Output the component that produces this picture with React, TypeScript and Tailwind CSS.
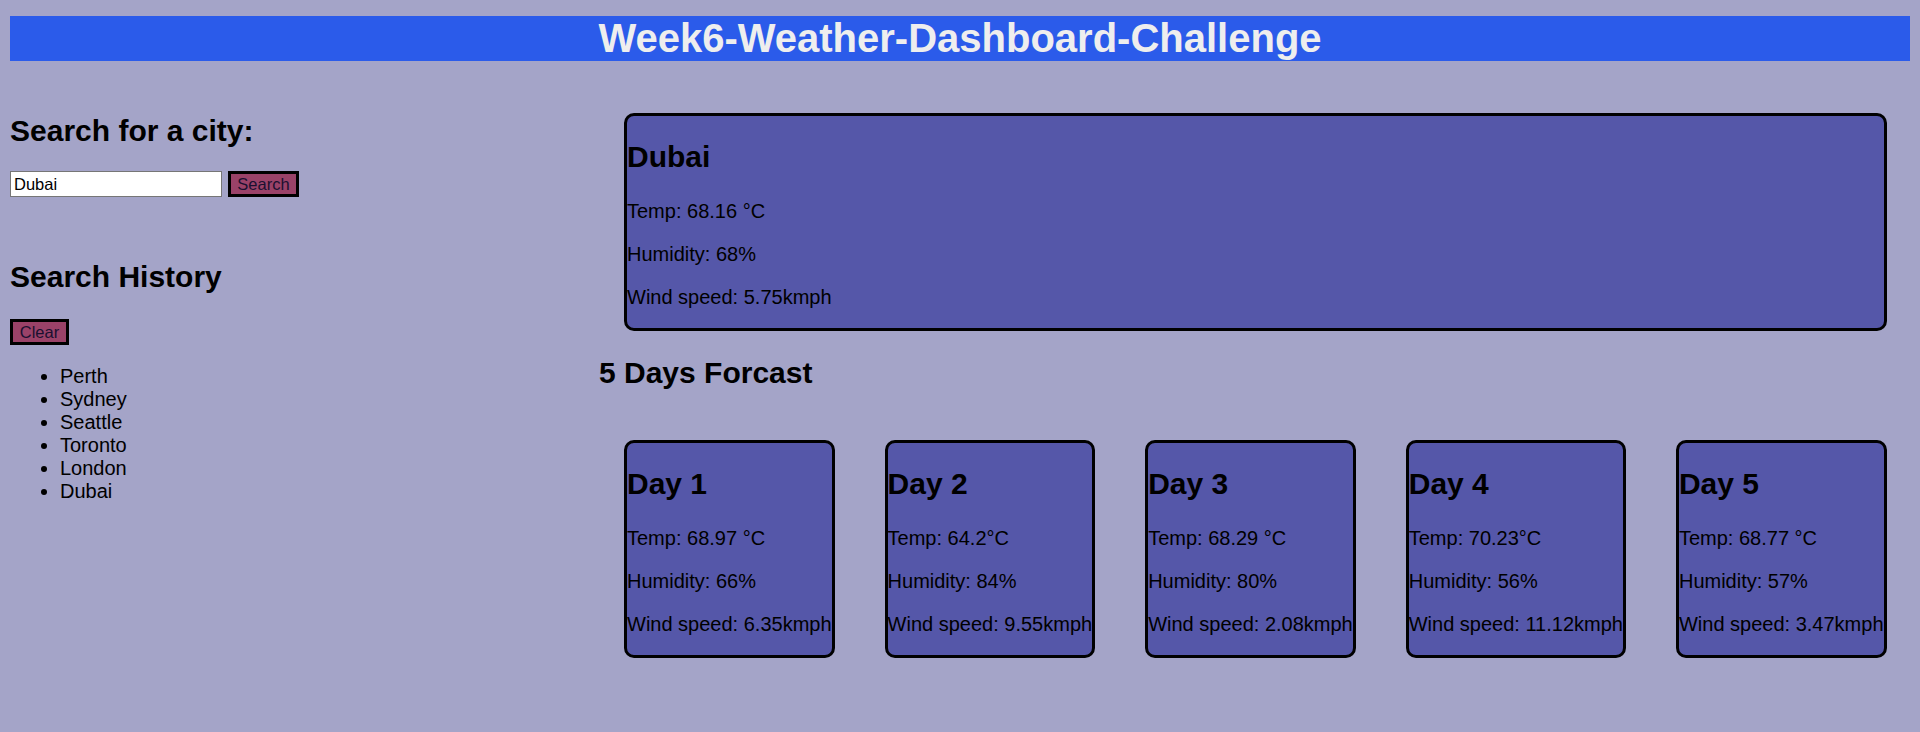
// Week6 weather dashboard: search panel on the left, current + 5 day forecast on the right

type Forecast = {
  label: string;
  temp: string;
  humidity: string;
  wind: string;
};

const HISTORY = ["Perth", "Sydney", "Seattle", "Toronto", "London", "Dubai"];

const FORECAST: Forecast[] = [
  { label: "Day 1", temp: "68.97 °C", humidity: "66%", wind: "6.35kmph" },
  { label: "Day 2", temp: "64.2°C", humidity: "84%", wind: "9.55kmph" },
  { label: "Day 3", temp: "68.29 °C", humidity: "80%", wind: "2.08kmph" },
  { label: "Day 4", temp: "70.23°C", humidity: "56%", wind: "11.12kmph" },
  { label: "Day 5", temp: "68.77 °C", humidity: "57%", wind: "3.47kmph" },
];

function WeatherCard({
  title,
  temp,
  humidity,
  wind,
  className,
}: {
  title: string;
  temp: string;
  humidity: string;
  wind: string;
  className: string;
}) {
  return (
    <div
      className={`rounded-[10px] border-[3px] border-black bg-[#5557a9] text-black ${className}`}
    >
      <h2 className="mt-[23px] text-[30px] leading-[35px] font-bold">{title}</h2>
      <p className="mt-[26px] text-[20px] leading-[23px]">Temp: {temp}</p>
      <p className="mt-[20px] text-[20px] leading-[23px]">Humidity: {humidity}</p>
      <p className="mt-[20px] mb-[19px] text-[20px] leading-[23px]">
        Wind speed: {wind}
      </p>
    </div>
  );
}

export default function App() {
  return (
    <div className="min-h-[732px] bg-[#a4a4c8] px-[10px] pt-[16px] font-['Liberation_Sans',Arial,sans-serif] text-black">
      <header className="flex h-[45px] items-center justify-center bg-[#2b5bea]">
        <h1 className="text-[40px] leading-[45px] font-bold text-[#eeeeee]">
          Week6-Weather-Dashboard-Challenge
        </h1>
      </header>

      <div className="mt-[27px] flex">
        <aside className="w-[589px] shrink-0">
          <h2 className="mt-[25px] text-[30px] leading-[35px] font-bold">
            Search for a city:
          </h2>

          <div className="mt-[23px] flex items-center gap-[6px]">
            <input
              type="text"
              defaultValue="Dubai"
              className="h-[26px] w-[212px] border border-[#767676] bg-white px-[3px] text-[16.5px] text-black outline-none"
            />
            <button
              type="button"
              className="h-[26px] w-[71px] border-[3px] border-black bg-[#9a4268] text-[16.5px] leading-none text-[#1a1030]"
            >
              Search
            </button>
          </div>

          <h2 className="mt-[62px] text-[30px] leading-[35px] font-bold">
            Search History
          </h2>

          <button
            type="button"
            className="mt-[25px] h-[26px] w-[59px] border-[3px] border-black bg-[#9a4268] text-[16.5px] leading-none text-[#1a1030]"
          >
            Clear
          </button>

          <ul className="mt-[20px] list-disc pl-[50px] text-[20px] leading-[23px]">
            {HISTORY.map((city) => (
              <li key={city}>{city}</li>
            ))}
          </ul>
        </aside>

        <main className="flex-1">
          <WeatherCard
            title="Dubai"
            temp="68.16 °C"
            humidity="68%"
            wind="5.75kmph"
            className="mx-[25px] mt-[25px]"
          />

          <h2 className="mt-[24px] text-[30px] leading-[35px] font-bold">
            5 Days Forcast
          </h2>

          <div className="mt-[25px] flex justify-between">
            {FORECAST.map((day) => (
              <WeatherCard
                key={day.label}
                title={day.label}
                temp={day.temp}
                humidity={day.humidity}
                wind={day.wind}
                className="mx-[25px] mt-[25px] whitespace-nowrap"
              />
            ))}
          </div>
        </main>
      </div>
    </div>
  );
}
